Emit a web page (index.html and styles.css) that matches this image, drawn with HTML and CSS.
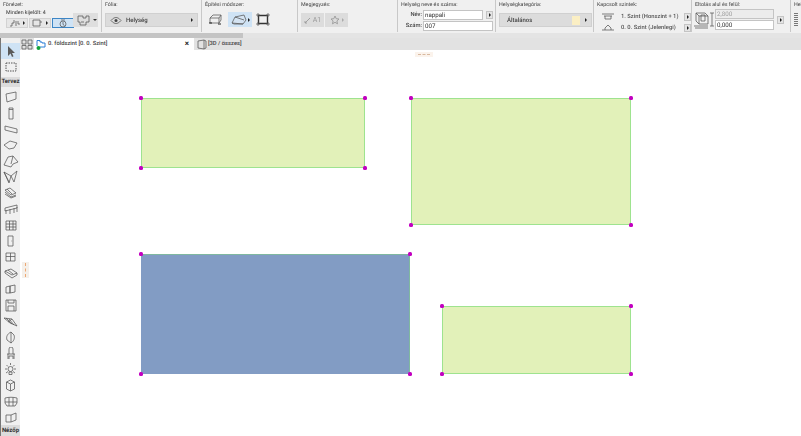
FILE: index.html
```html
<!DOCTYPE html>
<html lang="hu">
<head>
<meta charset="utf-8">
<title>Helység</title>
<link rel="stylesheet" href="styles.css">
</head>
<body>
<div class="app">
  <header class="toolbar">
    <section class="sec s1">
      <div class="lab">Fönézet:</div>
      <div class="sub">Minden kijelölt: 4</div>
      <div class="row">
        <div class="mini"><svg width="12" height="8" viewBox="0 0 12 8"><path d="M1 7h2V4h2V1M7 2v5M9 2v3h2" class="k"/></svg><i class="tri"></i></div>
        <div class="mini"><svg width="12" height="8" viewBox="0 0 12 8"><path d="M1 1h7v6H1zM8 3h2" class="k"/></svg><i class="tri"></i></div>
        <div class="mini on"><svg width="10" height="9" viewBox="0 0 10 9"><circle cx="5" cy="5" r="3" class="k"/><path d="M3 1h4M5 3v2.500l1.500 1" class="k"/></svg></div>
      </div>
      <div class="big"><svg width="13" height="11" viewBox="0 0 13 11"><path d="M1 1h5v2h3V1h3v6H9v3H3V7H1zM4 7h3" class="k"/></svg><i class="down"></i></div>
    </section>
    <section class="sec s2">
      <div class="lab">Fólia:</div>
      <div class="wide"><svg width="12" height="7" viewBox="0 0 12 7"><path d="M1 3.5C3 1 5 .5 6 .5s3 .5 5 3c-2 2.500-4 3-5 3s-3-.5-5-3z" class="k"/><circle cx="6" cy="3.500" r="1.500" fill="#444"/></svg><span class="val">Helység</span><i class="tri push"></i></div>
    </section>
    <section class="sec s3">
      <div class="lab">Építési módszer:</div>
      <div class="icons">
        <svg width="14" height="13" viewBox="0 0 14 13"><path d="M1 10V5l3-3h8v5l-2 3zM1 5h9v5M10 5l2-3" class="k"/><path d="M0 10h3M9 11h3" class="p"/></svg>
        <div class="act"><svg width="16" height="12" viewBox="0 0 16 12"><path d="M1 9l3-6 9-2 2 5-3 4-9 0z" class="b"/><path d="M1 9l11 1M4 3l9 3" class="k"/></svg><i class="tri"></i></div>
        <svg width="14" height="13" viewBox="0 0 14 13"><path d="M2.500 2.500h9v8h-9z" class="h"/><path d="M0 2h4M2 0v4M10 2h4M12 0v4M0 11h4M2 9v4M10 11h4M12 9v4" class="k"/></svg>
      </div>
    </section>
    <section class="sec s4">
      <div class="lab">Megjegyzés:</div>
      <div class="row">
        <div class="note a1"><svg width="7" height="7" viewBox="0 0 7 7"><path d="M1 6l5-5M1 6h2M1 6V4" class="g"/></svg><span>A1</span></div>
        <div class="note"><svg width="10" height="10" viewBox="0 0 10 10"><path d="M5 1l1.200 2.700 2.800.3-2.100 1.900.6 2.900L5 7.300 2.500 8.800l.6-2.900L1 4l2.800-.3z" class="g"/></svg><i class="tri pale"></i></div>
      </div>
    </section>
    <section class="sec s5">
      <div class="lab">Helység neve és száma:</div>
      <div class="fld f1"><span class="key">Név:</span><span class="inp n1">nappali</span><i class="sq"><i class="tri"></i></i></div>
      <div class="fld f2"><span class="key">Szám:</span><span class="inp n2">007</span></div>
    </section>
    <section class="sec s6">
      <div class="lab">Helységkategória:</div>
      <div class="wide cat"><span class="val">Általános</span><i class="swatch"></i><i class="tri"></i></div>
    </section>
    <section class="sec s7">
      <div class="lab">Kapcsolt szintek:</div>
      <div class="lvl l1"><svg width="14" height="7" viewBox="0 0 14 7"><path d="M1 1h12M3 3h8M4 3v3h6V3" class="k"/></svg><span class="lt">1. Szint (Honszint + 1)</span><i class="sq"><i class="tri"></i></i></div>
      <div class="lvl"><svg width="14" height="7" viewBox="0 0 14 7"><path d="M1 6h12M4 6V4l3-3 3 3v2" class="k"/></svg><span class="lt">0. 0. Szint (Jelenlegi)</span><i class="sq"><i class="tri"></i></i></div>
    </section>
    <section class="sec s8">
      <div class="lab">Eltolás alul és felül:</div>
      <div class="off">
        <svg width="21" height="20" viewBox="0 0 21 20"><path d="M2 3h9l3 3v8H5l-3-3zM2 3l3 3h9M5 6v8" class="k"/><path d="M7 5h4v6H7z" class="k"/><path d="M0 16h14M1 18h13" class="k"/><path d="M18 3v13M16 3h4M16 16h4" class="k"/></svg>
        <div class="stack"><span class="inp off1">2,800</span><span class="inp off2">0,000</span></div>
        <i class="sq"><i class="tri"></i></i>
      </div>
    </section>
    <section class="sec s9">
      <div class="lab">Hel</div>
      <div class="stub"></div>
    </section>
  </header>
  <div class="scrollbar"><div class="thumb"></div><div class="rest"></div></div>
  <div class="main">
    <aside class="side">
      <div class="tool sel"><svg width="10" height="13" viewBox="0 0 10 13"><path d="M2 1v10l2.500-2.500L6 12l1.500-.7L6 8h3z" fill="#5a5a5a"/></svg></div>
      <div class="tool"><svg width="12" height="10" viewBox="0 0 12 10"><path d="M1 1h10v8H1z" fill="none" stroke="#555" stroke-dasharray="1.500 1"/></svg></div>
      <div class="group">Tervez</div>
      <div class="tool"><svg width="12" height="12" viewBox="0 0 12 12"><path d="M1 3l10-2v7L2 11z" class="k"/></svg></div>
      <div class="tool"><svg width="6" height="13" viewBox="0 0 6 13"><path d="M1 1h4v11H1zM1 2.500h4" class="k"/></svg></div>
      <div class="tool"><svg width="14" height="9" viewBox="0 0 14 9"><path d="M1 1l12 3v4L1 5z" class="k"/></svg></div>
      <div class="tool"><svg width="15" height="10" viewBox="0 0 15 10"><path d="M1 5l6-4 7 2-3 5-5 1z" class="k"/></svg></div>
      <div class="tool"><svg width="16" height="13" viewBox="0 0 16 13"><path d="M1 10l4-8 5-1 5 6-5 2-2 3zM10 1l-2 8" class="k"/></svg></div>
      <div class="tool"><svg width="15" height="14" viewBox="0 0 15 14"><path d="M1 2l7 4 6-5-3 11-3-6-2 7zM1 2l5 10" class="k"/></svg></div>
      <div class="tool"><svg width="13" height="12" viewBox="0 0 13 12"><path d="M1 3l5-2 6 5-5 2zM1 5l6 5 5-2M1 7l6 4 5-2M3 2l5 5" class="k"/></svg></div>
      <div class="tool"><svg width="14" height="11" viewBox="0 0 14 11"><path d="M1 4l12-3v3L1 7zM2 6v4M6 5v5M10 4v5M13 3v5" class="k"/></svg></div>
      <div class="tool"><svg width="12" height="12" viewBox="0 0 12 12"><path d="M1 2h10v9H1zM1 5h10M1 8h10M4.500 2v9M8 2v9" class="k"/></svg></div>
      <div class="tool"><svg width="7" height="12" viewBox="0 0 7 12"><path d="M1 1h5v10H1zM4.500 6h.6" class="k"/></svg></div>
      <div class="tool"><svg width="11" height="10" viewBox="0 0 11 10"><path d="M1 1h9v8H1zM5.500 1v8M1 4.500h9" class="k"/></svg></div>
      <div class="tool"><svg width="14" height="11" viewBox="0 0 14 11"><path d="M1 3l6-2 6 4-5 2zM1 3v2l7 5 5-3V5M4 2l5 4" class="k"/></svg></div>
      <div class="tool"><svg width="11" height="10" viewBox="0 0 11 10"><path d="M1 3l4-1v7H1zM5 2l5-1v7l-5 1z" class="k"/></svg></div>
      <div class="tool"><svg width="12" height="13" viewBox="0 0 12 13"><path d="M1 1h10v11H1zM3 1v3h6V1M3 12V7h6v5" class="k"/></svg></div>
      <div class="tool"><svg width="15" height="11" viewBox="0 0 15 11"><path d="M1 2l8 1 5 7-7-3zM3 2l6 6M6 3l5 6M9 3l-4 3" class="k"/></svg></div>
      <div class="tool"><svg width="11" height="13" viewBox="0 0 11 13"><path d="M6 1C2 3 1 6 2 9l4 3c3-2 4-5 3-8zM6 1v11" class="k"/></svg></div>
      <div class="tool"><svg width="10" height="13" viewBox="0 0 10 13"><path d="M3 7V2a1.500 1.500 0 0 1 4 0v5M1 7h8M2 7v5M8 7v5M3 12V9h4v3" class="k"/></svg></div>
      <div class="tool"><svg width="13" height="13" viewBox="0 0 13 13"><circle cx="6.500" cy="6" r="2.500" class="k"/><path d="M5 9h3v2.500H5zM6.500 0v2M1 6h2M10 6h2M2.500 2l1.500 1.500M10.500 2L9 3.500M2 10l2-1.500M11 10L9 8.500" class="k"/></svg></div>
      <div class="tool"><svg width="11" height="13" viewBox="0 0 11 13"><path d="M5.500 1l4 2v7l-4 2-4-2V3zM1.500 3l4 2 4-2M5.500 5v7" class="k"/></svg></div>
      <div class="tool"><svg width="14" height="11" viewBox="0 0 14 11"><path d="M1 2c4-1 8-1 12 0v5l-2 3H3L1 7zM1 6h12M5 1.500V10M9 1.500V10" class="k"/></svg></div>
      <div class="tool"><svg width="12" height="11" viewBox="0 0 12 11"><path d="M1 3h5v7H1zM6 3l5-2v7l-5 2" class="k"/></svg></div>
      <div class="group last">Nézőp</div>
    </aside>
    <div class="work">
      <nav class="tabs">
        <div class="grid"><svg width="12" height="11" viewBox="0 0 12 11"><path d="M1 1h4v4H1zM7 1h4v4H7zM1 6.500h4v3.500H1zM7 6.500h4v3.500H7z" class="k"/></svg></div>
        <div class="tab cur"><svg width="11" height="11" viewBox="0 0 11 11"><path d="M1 7V1.500h3V3h2v1h3v4H4" fill="none" stroke="#2b7fd6"/><circle cx="2.500" cy="9" r="2" fill="#10a23c"/></svg><span class="tt">0. földszint [0. 0. Szint]</span><span class="x">×</span></div>
        <div class="tab other"><svg width="10" height="11" viewBox="0 0 10 11"><path d="M1 2l6-1 2 1v7l-2 1-6-1zM7 1v9" class="k"/></svg><span class="tt">[3D / összes]</span></div>
      </nav>
      <main class="canvas">
        <div class="gripv"></div>
        <div class="griph"></div>
        <div class="room r1"><i class="pin tl"></i><i class="pin tr"></i><i class="pin bl"></i><i class="pin br"></i></div>
        <div class="room r2"><i class="pin tl"></i><i class="pin tr"></i><i class="pin bl"></i><i class="pin br"></i></div>
        <div class="room r3"><i class="pin tl"></i><i class="pin tr"></i><i class="pin bl"></i><i class="pin br"></i></div>
        <div class="room r4"><i class="pin tl"></i><i class="pin tr"></i><i class="pin bl"></i><i class="pin br"></i></div>
      </main>
    </div>
  </div>
</div>
</body>
</html>
```
FILE: styles.css
```css
* { box-sizing: border-box; }
html, body { margin: 0; padding: 0; background: #fff; }
body { font-family: Roboto, "Open Sans", sans-serif; color: #333; overflow: hidden; text-rendering: geometricPrecision; }
i { font-style: normal; display: block; }
svg { display: block; flex: none; }
.k { fill: none; stroke: #555; stroke-width: .75; }
.g { fill: none; stroke: #9a9a9a; stroke-width: .9; }
.b { fill: #d4e3f2; stroke: #555; stroke-width: .75; }
.h { fill: none; stroke: #333; stroke-width: 1.400; }
.p { fill: none; stroke: #222; stroke-width: 1.200; }
.app { width: 801px; height: 436px; display: flex; flex-direction: column; overflow: hidden; filter: blur(.3px); }

.toolbar { height: 33px; flex: none; background: #f0f0f0; display: flex; padding-bottom: 1px; }
.sec { border-right: 1px solid #c8c8c8; position: relative; padding: 2px 0 0 3px; flex: none; }
.s1 { width: 102px; } .s2 { width: 100px; } .s3 { width: 96px; } .s4 { width: 100px; }
.s5 { width: 98px; } .s6 { width: 98px; } .s7 { width: 98px; } .s8 { width: 99px; }
.s9 { width: 10px; border-right: 0; overflow: hidden; }
.lab { font-size: 5.300px; line-height: 7px; color: #444; white-space: nowrap; }
.sub { font-size: 5.300px; line-height: 6px; margin: 1px 0 0 3px; color: #333; white-space: nowrap; }
.row { display: flex; gap: 1px; }

.s1 .row { margin: 2px 0 0 3px; }
.mini { width: 22px; height: 10px; background: #e6e6e6; border: 1px solid #d2d2d2; display: flex; align-items: center; justify-content: center; gap: 2px; }
.mini.on { background: #cfe3f5; border-color: #3d86c6; }
.tri { width: 0; height: 0; border-left: 2.500px solid #222; border-top: 2px solid transparent; border-bottom: 2px solid transparent; flex: none; }
.tri.pale { border-left-color: #aaa; }
.push { margin-left: auto; }
.big { position: absolute; left: 73px; top: 13px; width: 25px; height: 14px; background: #dedede; display: flex; align-items: center; padding-left: 4px; gap: 3px; }
.down { border-top: 2.500px solid #333; border-left: 2px solid transparent; border-right: 2px solid transparent; }

.wide { margin-top: 4px; height: 14px; width: 93px; background: #dcdcdc; border: 1px solid #d0d0d0; display: flex; align-items: center; padding: 0 4px; gap: 4px; }
.val { font-size: 6px; font-weight: 500; color: #444; }

.icons { display: flex; align-items: center; margin: 3px 0 0 4px; }
.act { width: 24px; height: 15px; margin: 0 4px 0 5px; background: #cfe3f5; display: flex; align-items: center; justify-content: center; gap: 1px; }

.s4 .row { margin-top: 4px; }
.note { width: 23px; height: 14px; background: #dcdcdc; display: flex; align-items: center; justify-content: center; gap: 2px; color: #9a9a9a; font-size: 7px; }

.fld { display: flex; align-items: center; font-size: 6px; }
.f1 { position: absolute; left: 0; top: 10px; }
.f2 { position: absolute; left: 0; top: 21px; }
.key { width: 25px; text-align: right; padding-right: 1px; font-weight: 500; color: #444; font-size: 5.800px; }
.inp { display: block; height: 10px; line-height: 8px; background: #fff; border: 1px solid #c4c4c4; padding-left: 1px; font-size: 6.200px; color: #333; }
.n1 { width: 60px; } .n2 { width: 70px; }
.sq { width: 7px; height: 8px; background: #e4e4e4; border: 1px solid #c4c4c4; display: flex; align-items: center; justify-content: center; }
.f1 .sq { margin-left: 3px; }

.cat { padding-left: 7px; }
.cat .val { flex: 1; }
.swatch { width: 8px; height: 9px; background: #fbefc4; }
.cat .tri { margin-left: 1px; }

.lvl { display: flex; align-items: center; height: 11px; margin-left: 4px; }
.l1 { margin-top: 2px; }
.lt { font-size: 5.800px; font-weight: 500; color: #555; margin-left: 6px; width: 62px; white-space: nowrap; }
.lvl .sq { margin-left: 5px; }

.off { display: flex; align-items: center; position: absolute; left: 2px; top: 9px; }
.stack { display: flex; flex-direction: column; gap: 1px; }
.off1 { width: 59px; background: #ececec; color: #a0a0a0; }
.off2 { width: 59px; }
.off .sq { margin-left: 3px; }
.stub { width: 4px; height: 14px; margin-top: 4px; background: repeating-linear-gradient(#777 0 1px, #f0f0f0 1px 2px); }

.scrollbar { height: 5px; flex: none; display: flex; background: #e4e4e4; }
.thumb { width: 243px; background: #c4c4c4; }
.rest { flex: 1; background: #e4e4e4; }

.main { flex: 1; display: flex; min-height: 0; }
.side { width: 20px; flex: none; background: #f0f0f0; border-left: 1px solid #777; padding-top: 5px; display: flex; flex-direction: column; }
.tool { height: 16px; flex: none; display: flex; align-items: center; justify-content: center; }
.tool.sel { background: #cfe3f5; }
.group { height: 10px; flex: none; margin: 2px 0; background: #dcdcdc; font-size: 6px; font-weight: 700; line-height: 10px; text-align: center; color: #333; }
.group.last { margin: 0; height: 11px; line-height: 11px; }

.work { flex: 1; display: flex; flex-direction: column; min-width: 0; }
.tabs { height: 12px; flex: none; display: flex; background: #e2e2e2; }
.grid { width: 14px; display: flex; align-items: center; justify-content: center; }
.tab { display: flex; align-items: center; font-size: 5.800px; white-space: nowrap; }
.tab.cur { width: 160px; background: #fff; padding-left: 2px; gap: 1px; }
.tab.other { flex: 1; padding-left: 3px; gap: 1px; }
.tt { font-weight: 500; color: #444; }
.x { margin-left: auto; padding-right: 5px; font-size: 8px; font-weight: 700; line-height: 8px; color: #222; }

.canvas { flex: 1; position: relative; background: #fff; }
.griph { position: absolute; left: 395px; top: 2px; width: 18px; height: 5px; background: #fbf3ec; }
.griph::after { content: ""; position: absolute; left: 3px; right: 3px; top: 2px; border-top: 1px dashed #d8b9a0; }
.gripv { position: absolute; left: 2px; top: 212px; width: 7px; height: 16px; background: #f5f0ea; }
.gripv::after { content: ""; position: absolute; top: 1px; bottom: 1px; left: 3px; border-left: 1px dashed #eda873; }
.room { position: absolute; background: #e2f1b9; border: 1px solid #9ee38f; }
.r1 { left: 121px; top: 48px; width: 224px; height: 70px; }
.r2 { left: 391px; top: 48px; width: 220px; height: 127px; }
.r3 { left: 121px; top: 204px; width: 269px; height: 120px; background: #829cc4; border-color: #7fb8a0; border-left-color: #829cc4; border-bottom-color: #829cc4; }
.r4 { left: 422px; top: 256px; width: 189px; height: 68px; }
.pin { position: absolute; width: 4px; height: 4px; border-radius: 1.500px; background: #c200c0; }
.tl { left: -3px; top: -3px; } .tr { right: -3px; top: -3px; }
.bl { left: -3px; bottom: -3px; } .br { right: -3px; bottom: -3px; }
```
